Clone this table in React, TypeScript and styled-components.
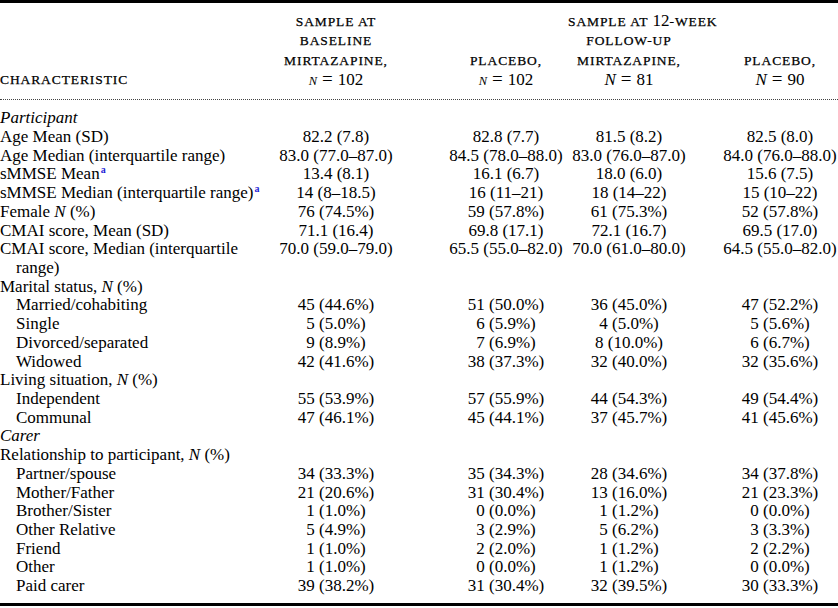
import React from 'react';
import styled, { createGlobalStyle } from 'styled-components';

const GlobalStyle = createGlobalStyle`
  html, body {
    margin: 0;
    padding: 0;
    background: #ffffff;
    overflow: hidden;
  }
  body {
    font-family: "Liberation Serif", "Times New Roman", serif;
    color: #000000;
  }
`;

const COLUMNS = '270px 132px 166px 122px 148px';

const Table = styled.div`
  width: 838px;
  font-size: 17px;
  line-height: 18.72px;
`;

const Rule = styled.div<{ $weight: number }>`
  height: ${({ $weight }) => $weight}px;
  background: #000;
`;

const HeadRow = styled.div`
  display: grid;
  grid-template-columns: ${COLUMNS};
  align-items: end;
  padding: 8px 0 11px;
  border-bottom: 1px dotted #444;
`;

const HeadCell = styled.div<{ $shift?: number; $left?: boolean }>`
  padding-left: ${({ $shift }) => $shift ?? 0}px;
  text-align: ${({ $left }) => ($left ? 'left' : 'center')};
  white-space: nowrap;
`;

const HeadLine = styled.div`
  height: 19.3px;
  line-height: 19.3px;
`;

const Caps = styled.span`
  font-size: 13.5px;
  letter-spacing: 0.9px;
  text-transform: uppercase;
  -webkit-text-stroke: 0.25px #000;
`;

const Equals = styled.span`
  display: inline-block;
  font-size: 19px;
  margin: 0 5px;
`;

const Body = styled.div`
  padding: 9px 0 7px;
`;

const Row = styled.div`
  display: grid;
  grid-template-columns: ${COLUMNS};
  align-items: start;
`;

const LabelCell = styled.div<{ $indent?: boolean; $italic?: boolean }>`
  padding-left: ${({ $indent }) => ($indent ? 32 : 16)}px;
  text-indent: -16px;
  font-style: ${({ $italic }) => ($italic ? 'italic' : 'normal')};
`;

const ValueCell = styled.div<{ $shift?: number }>`
  padding-left: ${({ $shift }) => $shift ?? 0}px;
  text-align: center;
  white-space: nowrap;
`;

const Italic = styled.i<{ $small?: boolean }>`
  font-style: italic;
  font-size: ${({ $small }) => ($small ? '12.5px' : 'inherit')};
`;

const Note = styled.sup`
  font-size: 10px;
  font-weight: bold;
  color: #1f1fd6;
  line-height: 0;
  vertical-align: 6px;
  margin-left: 1px;
`;

type RowData = {
  label: React.ReactNode;
  values?: string[];
  indent?: boolean;
  group?: boolean;
  note?: boolean;
};

const N = () => <Italic>N</Italic>;

const rows: RowData[] = [
  { label: 'Participant', group: true },
  { label: 'Age Mean (SD)', values: ['82.2 (7.8)', '82.8 (7.7)', '81.5 (8.2)', '82.5 (8.0)'] },
  {
    label: 'Age Median (interquartile range)',
    values: ['83.0 (77.0–87.0)', '84.5 (78.0–88.0)', '83.0 (76.0–87.0)', '84.0 (76.0–88.0)'],
  },
  { label: 'sMMSE Mean', note: true, values: ['13.4 (8.1)', '16.1 (6.7)', '18.0 (6.0)', '15.6 (7.5)'] },
  {
    label: 'sMMSE Median (interquartile range)',
    note: true,
    values: ['14 (8–18.5)', '16 (11–21)', '18 (14–22)', '15 (10–22)'],
  },
  { label: <>Female <N /> (%)</>, values: ['76 (74.5%)', '59 (57.8%)', '61 (75.3%)', '52 (57.8%)'] },
  { label: 'CMAI score, Mean (SD)', values: ['71.1 (16.4)', '69.8 (17.1)', '72.1 (16.7)', '69.5 (17.0)'] },
  {
    label: 'CMAI score, Median (interquartile range)',
    values: ['70.0 (59.0–79.0)', '65.5 (55.0–82.0)', '70.0 (61.0–80.0)', '64.5 (55.0–82.0)'],
  },
  { label: <>Marital status, <N /> (%)</> },
  { label: 'Married/cohabiting', indent: true, values: ['45 (44.6%)', '51 (50.0%)', '36 (45.0%)', '47 (52.2%)'] },
  { label: 'Single', indent: true, values: ['5 (5.0%)', '6 (5.9%)', '4 (5.0%)', '5 (5.6%)'] },
  { label: 'Divorced/separated', indent: true, values: ['9 (8.9%)', '7 (6.9%)', '8 (10.0%)', '6 (6.7%)'] },
  { label: 'Widowed', indent: true, values: ['42 (41.6%)', '38 (37.3%)', '32 (40.0%)', '32 (35.6%)'] },
  { label: <>Living situation, <N /> (%)</> },
  { label: 'Independent', indent: true, values: ['55 (53.9%)', '57 (55.9%)', '44 (54.3%)', '49 (54.4%)'] },
  { label: 'Communal', indent: true, values: ['47 (46.1%)', '45 (44.1%)', '37 (45.7%)', '41 (45.6%)'] },
  { label: 'Carer', group: true },
  { label: <>Relationship to participant, <N /> (%)</> },
  { label: 'Partner/spouse', indent: true, values: ['34 (33.3%)', '35 (34.3%)', '28 (34.6%)', '34 (37.8%)'] },
  { label: 'Mother/Father', indent: true, values: ['21 (20.6%)', '31 (30.4%)', '13 (16.0%)', '21 (23.3%)'] },
  { label: 'Brother/Sister', indent: true, values: ['1 (1.0%)', '0 (0.0%)', '1 (1.2%)', '0 (0.0%)'] },
  { label: 'Other Relative', indent: true, values: ['5 (4.9%)', '3 (2.9%)', '5 (6.2%)', '3 (3.3%)'] },
  { label: 'Friend', indent: true, values: ['1 (1.0%)', '2 (2.0%)', '1 (1.2%)', '2 (2.2%)'] },
  { label: 'Other', indent: true, values: ['1 (1.0%)', '0 (0.0%)', '1 (1.2%)', '0 (0.0%)'] },
  { label: 'Paid carer', indent: true, values: ['39 (38.2%)', '31 (30.4%)', '32 (39.5%)', '30 (33.3%)'] },
];

// padding-left per data column, so each column's text sits on the reference centre line
const shifts = [0, 42, 0, 32];

const Eq = () => <Equals>=</Equals>;

const App: React.FC = () => {
  return (
    <>
      <GlobalStyle />
      <Table>
        <Rule $weight={3} />
        <HeadRow>
          <HeadCell $left>
            <HeadLine>
              <Caps>Characteristic</Caps>
            </HeadLine>
          </HeadCell>
          <HeadCell $shift={shifts[0]}>
            <HeadLine>
              <Caps>Sample at</Caps>
            </HeadLine>
            <HeadLine>
              <Caps>baseline</Caps>
            </HeadLine>
            <HeadLine>
              <Caps>mirtazapine,</Caps>
            </HeadLine>
            <HeadLine>
              <Italic $small>N</Italic>
              <Eq />
              102
            </HeadLine>
          </HeadCell>
          <HeadCell $shift={shifts[1]}>
            <HeadLine>
              <Caps>placebo,</Caps>
            </HeadLine>
            <HeadLine>
              <Italic $small>N</Italic>
              <Eq />
              102
            </HeadLine>
          </HeadCell>
          <HeadCell $shift={shifts[2]}>
            <HeadLine>
              <Caps>sample at </Caps>12<Caps>-week</Caps>
            </HeadLine>
            <HeadLine>
              <Caps>follow-up</Caps>
            </HeadLine>
            <HeadLine>
              <Caps>mirtazapine,</Caps>
            </HeadLine>
            <HeadLine>
              <Italic>N</Italic>
              <Eq />
              81
            </HeadLine>
          </HeadCell>
          <HeadCell $shift={shifts[3]}>
            <HeadLine>
              <Caps>placebo,</Caps>
            </HeadLine>
            <HeadLine>
              <Italic>N</Italic>
              <Eq />
              90
            </HeadLine>
          </HeadCell>
        </HeadRow>
        <Body>
          {rows.map((row, i) => (
            <Row key={i}>
              <LabelCell $indent={row.indent} $italic={row.group}>
                {row.label}
                {row.note && <Note>a</Note>}
              </LabelCell>
              {(row.values ?? ['', '', '', '']).map((v, j) => (
                <ValueCell key={j} $shift={shifts[j]}>
                  {v}
                </ValueCell>
              ))}
            </Row>
          ))}
        </Body>
        <Rule $weight={3} />
      </Table>
    </>
  );
};

export default App;
